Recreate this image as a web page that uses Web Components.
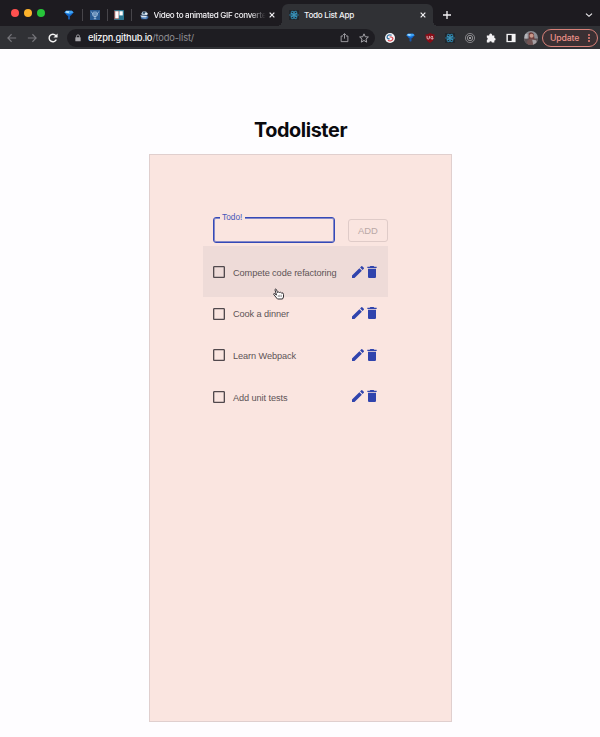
<!DOCTYPE html>
<html lang="en">
<head>
<meta charset="utf-8">
<title>Todo List App</title>
<style>
html,body{margin:0;height:100%;background:#fefdff}
body{font-family:"Liberation Sans",Arial,sans-serif;overflow:hidden}
</style>
</head>
<body>
<browser-window></browser-window>
<script>
const react = '<rect width="24" height="24" rx="2" fill="#20262c"/><g fill="none" stroke="#349bc9" stroke-width="1.7"><ellipse cx="12" cy="12" rx="10.5" ry="4.2"/><ellipse cx="12" cy="12" rx="10.5" ry="4.2" transform="rotate(60 12 12)"/><ellipse cx="12" cy="12" rx="10.5" ry="4.2" transform="rotate(120 12 12)"/></g><circle cx="12" cy="12" r="2.3" fill="#55b9df"/>';
const ICONS = {
  gem: '<path d="M1 6l4-4h14l4 4-7 8h-2v8h-4v-8H8z" fill="#1168d2"/><path d="M1 6l4-4h14l4 4-11 4z" fill="#3fa4f4"/><path d="M5 3h8l-2 4-7-1z" fill="#c4eaff"/><path d="M10 14h4v8h-4z" fill="#1b59a5"/>',
  psi: '<rect width="24" height="24" fill="#295b93"/><g fill="none" stroke="#b7d0e9" stroke-width="1.800"><path d="M2 4l4 3v4q1 5 6 5t6-5V7l4-3M12 3v18M9 21h6M9 4v9M15 4v9"/></g>',
  trello: '<rect width="24" height="24" rx="2" fill="#2c7791"/><path d="M0 2h12v20H0z" fill="#bd493a" opacity=".65"/><rect x="3" y="3" width="8" height="17" fill="#fff"/><rect x="13" y="3" width="8" height="10" fill="#fff"/>',
  gif: '<path d="M7 1h9l4 5-2 5H7L3 8z" fill="#a9bdd0"/><path d="M8 3h6v4H8z" fill="#24445f"/><path d="M13 5h7v5h-6z" fill="#e3edf5"/><path d="M1 12h18l4 4-4 6H4z" fill="#3869a5"/><path d="M1 12l15 1 4 3-15 1z" fill="#dbe4ed"/><path d="M9 17h8v3H9z" fill="#90b7dd"/>',
  react,
  close: '<path d="M5 5l14 14M19 5L5 19" fill="none" stroke="currentColor" stroke-width="3.6"/>',
  plus: '<path d="M12 0v24M0 12h24" fill="none" stroke="currentColor" stroke-width="4"/>',
  chevron: '<path d="M3 8l9 8 9-8" fill="none" stroke="currentColor" stroke-width="3.5"/>',
  back: '<path d="M22 12H2M11 3L2 12l9 9" fill="none" stroke="currentColor" stroke-width="2.6"/>',
  forward: '<path d="M2 12h20M13 3l9 9-9 9" fill="none" stroke="currentColor" stroke-width="2.6"/>',
  reload: '<path d="M20 15.5A9 9 0 1 1 18.5 6L21 9" fill="none" stroke="currentColor" stroke-width="3.4"/><path d="M23 1v10H13z" fill="currentColor"/>',
  lock: '<rect x="4" y="10" width="16" height="12" rx="1.5" fill="currentColor"/><path d="M7.5 11V7a4.5 4.5 0 0 1 9 0v4" fill="none" stroke="currentColor" stroke-width="2.6"/>',
  share: '<path d="M8 8H3v15h18V8h-5M12 15V2M7.5 6L12 1.500l4.500 4.500" fill="none" stroke="currentColor" stroke-width="2.4"/>',
  star: '<path d="M12 2l3 7 7.500.6-5.700 5 1.700 7.400L12 18l-6.500 4 1.700-7.400-5.700-5L9 9z" fill="none" stroke="currentColor" stroke-width="2.4"/>',
  swirl: '<circle cx="12" cy="12" r="12" fill="#f7f5f8"/><path d="M16 5.500C11 3 5 5 5 10c0 3 3 4 6 4" fill="none" stroke="#3676a3" stroke-width="3"/><path d="M7 17c4 4 12 1.500 12-4 0-3-3-3.500-8-4" fill="none" stroke="#db4e56" stroke-width="3"/>',
  shield: '<path d="M12 0q6 3.500 11 3.500c0 10-2 15-11 20.500C3 18.500 1 13.500 1 3.500 6 3.500 12 0 12 0z" fill="#880d17"/><g fill="none" stroke="#ead0d2" stroke-width="2"><path d="M5 7v5q0 2.500 2.800 2.500T10.500 12V7M19 8.500q-5-2-5 2.500t5 3.500v-3h-2"/></g>',
  target: '<g fill="none" stroke="#a3a2a6"><circle cx="12" cy="12" r="11" stroke-width="1.700"/><circle cx="12" cy="12" r="6.500" stroke-width="2"/></g><circle cx="12" cy="12" r="2.600" fill="#b9b8bc"/>',
  puzzle: '<path d="M2 6h6a3.500 3.500 0 1 1 6.500 0H20v6a3 3 0 1 1 0 6v5h-6a3 3 0 0 0-6 0H2v-6a3.200 3.200 0 0 0 0-6z" fill="#f2f1f3"/>',
  panel: '<path d="M1 2h22v20H1z" fill="#f4f4f5"/><path d="M4.500 5h9v14h-9z" fill="#222226"/>',
  pencil: '<path d="M3 17.250V21h3.750L17.810 9.940l-3.750-3.750L3 17.250zM20.710 7.040a1 1 0 0 0 0-1.410l-2.340-2.340a1 1 0 0 0-1.410 0l-1.830 1.830 3.750 3.750 1.830-1.830z" fill="currentColor"/>',
  trash: '<path d="M6 19c0 1.100.9 2 2 2h8c1.100 0 2-.9 2-2V7H6v12zM19 4h-3.500l-1-1h-5l-1 1H5v2h14V4z" fill="currentColor"/>',
  box: '<path d="M19 5v14H5V5h14m0-2H5c-1.100 0-2 .9-2 2v14c0 1.100.9 2 2 2h14c1.100 0 2-.9 2-2V5c0-1.100-.9-2-2-2z" fill="currentColor"/>',
  avatar: '<defs><clipPath id="c"><circle cx="12" cy="12" r="12"/></clipPath></defs><g clip-path="url(#c)"><path fill="#8c8e95" d="M0 0h24v24H0z"/><path fill="#5b5053" d="M0 13h24v11H0z"/><path fill="#6e3d3b" d="M8 4q5-4 9 1l1 9H8z"/><circle cx="13" cy="8" r="3.500" fill="#c89789"/><path d="M4 24q1-11 9-11t8 11z" fill="#725454"/><path d="M14 15l7 1 2 8h-7z" fill="#a6a1a5"/><path d="M1 5h5v8H1z" fill="#b4b5ba"/></g>',
  hand: '<path d="M8 21l-4-5-2.500-3c-1-1.700 1-2.700 2.500-1.200l3 2.200-3-10C3.500 2 6 1.200 7 3.200L9 9l2-1 2 1 2-.5 2 1.500 2.500-.3 1.500 3.300v5L19 22H9z" fill="#fff" stroke="#292529" stroke-width="1.900"/><path d="M10.500 14v4M13.500 13.500V18M16.500 13.500V18" stroke="#393439" stroke-width="1"/>'
};
function element(name, html, setup) {
  customElements.define(name, class extends HTMLElement {
    constructor() {
      super();
      const t = document.createElement('template');
      t.innerHTML = html;
      this.attachShadow({mode: 'open'}).append(t.content.cloneNode(true));
    }
    connectedCallback() { if (setup) setup(this); }
  });
}
element('ui-icon', '<style>:host{display:block;flex:none;width:10px;height:10px}svg{display:block;width:100%;height:100%;overflow:visible}</style><svg viewBox="0 0 24 24" aria-hidden="true"></svg>', el => {
  el.shadowRoot.querySelector('svg').innerHTML = ICONS[el.getAttribute('name')];
  const s = el.getAttribute('size');
  if (s) el.style.width = el.style.height = s + 'px';
});
element('tab-strip', `<style>
:host{display:flex;height:26px;background:#1d1b20;color:#f2f1f4;font:500 8.200px Inter,sans-serif;letter-spacing:-.15px;align-items:center}
.lights{box-sizing:border-box;display:flex;gap:5px;padding-left:11px;width:53px}.lights i{width:8px;height:8px;border-radius:50%;background:#ff514f}.lights i:nth-child(2){background:#fdb32b}.lights i:nth-child(3){background:#27c53a}
.pin{display:flex;width:24.500px;height:12px;justify-content:center;align-items:center;border-right:1px solid #47454a;box-sizing:border-box;margin-top:4px}
.pin.first{width:30px;padding-left:3px}
.tab{display:flex;align-items:center;box-sizing:border-box;white-space:nowrap;height:22px;margin-top:4px}
.idle{width:150px;padding-left:8px}.idle span{width:114px;margin:0 0 0 4.500px;font-size:8.100px;letter-spacing:-.3px;-webkit-mask-image:linear-gradient(90deg,#000 84%,transparent 98%)}
.active{width:151px;background:#303135;border-radius:6px 6px 0 0;padding:0 6px 0 7px;position:relative}.active span{margin-left:5px;flex:1;letter-spacing:-.3px}
.active:before,.active:after{content:"";position:absolute;bottom:0;width:5px;height:5px;background:radial-gradient(circle at 0 0,transparent 5px,#303135 5px)}.active:before{left:-5px}.active:after{right:-5px;transform:scaleX(-1)}
.plus{margin:4px 0 0 10px}.down{margin:4px 7px 0 auto}
</style><div class="lights"><i></i><i></i><i></i></div>
<div class="pin first"><ui-icon name="gem"></ui-icon></div>
<div class="pin"><ui-icon name="psi"></ui-icon></div><div class="pin"><ui-icon name="trello"></ui-icon></div>
<div class="tab idle"><ui-icon name="gif" size="9"></ui-icon><span>Video to animated GIF converte</span><ui-icon name="close" size="8"></ui-icon></div>
<div class="tab active"><ui-icon name="react"></ui-icon><span>Todo List App</span><ui-icon name="close" size="8"></ui-icon></div>
<ui-icon class="plus" name="plus" size="8"></ui-icon><ui-icon class="down" name="chevron" size="8"></ui-icon>`);
element('address-bar', `<style>
:host{display:flex;align-items:center;box-sizing:border-box;height:23px;background:#303135;color:#eee;padding-left:7px}
.nav{display:flex;width:60px;gap:10px;align-items:center;color:#77777c}.nav :last-child{color:#f4f4f4;margin-left:1px}
.url{display:flex;align-items:center;box-sizing:border-box;width:308px;height:18px;border-radius:9px;background:#1e1d22;padding:0 6px 0 7px;color:#a6a5aa}.url p{margin:0 auto 0 6px;color:#8f8e93;font:400 9.300px Inter,sans-serif;letter-spacing:-.12px}.url b{font-weight:500;color:#f5f4f6;letter-spacing:-.27px}.url ui-icon+ui-icon{margin-left:10px}
.ext{display:flex;padding-left:5px;width:162px}.ext span{display:flex;width:20.100px;align-items:center;justify-content:center}
.update{box-sizing:border-box;width:56px;height:18px;border:1px solid #d98179;border-radius:9px;color:#ec9188;font:500 8.700px/16px Inter,sans-serif;padding:0 7px;display:flex;align-items:center;justify-content:space-between;background:#3a3033;letter-spacing:-.15px}.dots{display:grid;gap:1px}.dots i{width:2px;height:2px;background:#f08077;border-radius:50%}
</style><div class="nav"><ui-icon name="back"></ui-icon><ui-icon name="forward"></ui-icon><ui-icon name="reload"></ui-icon></div>
<div class="url"><ui-icon name="lock" size="8"></ui-icon><p><b>elizpn.github.io</b>/todo-list/</p><ui-icon name="share" size="9"></ui-icon><ui-icon name="star"></ui-icon></div>
<div class="ext"><span><ui-icon name="swirl"></ui-icon></span><span><ui-icon name="gem" size="9"></ui-icon></span><span><ui-icon name="shield"></ui-icon></span><span><ui-icon name="react"></ui-icon></span><span><ui-icon name="target"></ui-icon></span><span><ui-icon name="puzzle"></ui-icon></span><span><ui-icon name="panel"></ui-icon></span><span><ui-icon name="avatar" size="14"></ui-icon></span></div>
<div class="update">Update<div class="dots"><i></i><i></i><i></i></div></div>`);
element('todo-input', `<style>:host{display:flex;height:27px;margin-left:10px}fieldset{position:relative;box-sizing:border-box;width:122px;height:26px;margin:0;border:1px solid #3449b7;box-shadow:inset 0 0 0 1px rgba(52,73,183,.6);border-radius:3px;padding:0}label{position:absolute;left:6px;top:-5px;background:#fae5e0;padding:0 3px 0 2px;color:#4656b8;font-size:8.300px;line-height:9px}button{box-sizing:border-box;width:40px;height:23px;margin:2px 0 0 13px;padding:0;border:1px solid #dfcbc8;border-radius:3px;background:none;color:#b9a8a7;font:9.400px "Liberation Sans",sans-serif}</style><fieldset><label>Todo!</label></fieldset><button disabled>ADD</button>`);
element('todo-item', `<style>
:host{display:flex;box-sizing:border-box;align-items:center;width:185px;height:51px;margin-bottom:-9.400px;padding:1px 9px 0 7.500px;color:#5d5356;font-size:9.200px;letter-spacing:-.09px}
:host([hovered]){background:#eedbd8}.text{margin:1.500px 0 0 6.500px;flex:1;white-space:nowrap}ui-icon[name=pencil],ui-icon[name=trash]{color:#3044ad;margin-top:-1px}ui-icon[name=pencil]{margin-right:-2px}ui-icon[name=trash]{margin-right:-.8px}ui-icon[name=box]{color:#51494d}
</style><ui-icon name="box" size="16"></ui-icon><span class="text"><slot></slot></span><ui-icon name="pencil" size="16"></ui-icon><ui-icon name="trash" size="16"></ui-icon>`);
element('todo-card', `<style>:host{display:block;box-sizing:border-box;width:303px;height:568px;margin:0 auto;background:#fae5e0;border:1px solid #e0cfce;padding:62px 0 0 53px;position:relative;left:.5px}.list{display:flex;flex-direction:column;margin-top:2px}</style><todo-input></todo-input><div class="list"><slot></slot></div>`);
element('mouse-pointer', `<style>:host{position:absolute;left:273px;top:287.500px;width:12px;height:12px}</style><ui-icon name="hand" size="12"></ui-icon>`);
element('browser-window', `<style>:host{display:block;height:737px;position:relative}h1{font:700 19.800px/24px Inter,sans-serif;margin:0;padding:69px 0 12px;text-align:center;color:#0b0a0e;letter-spacing:-.4px}h1 span{margin-left:1px}</style>
<tab-strip></tab-strip><address-bar></address-bar><main><h1><span>Todolister</span></h1><todo-card><todo-item hovered>Compete code refactoring</todo-item><todo-item>Cook a dinner</todo-item><todo-item>Learn Webpack</todo-item><todo-item>Add unit tests</todo-item></todo-card></main><mouse-pointer></mouse-pointer>`);
</script>
</body>
</html>
